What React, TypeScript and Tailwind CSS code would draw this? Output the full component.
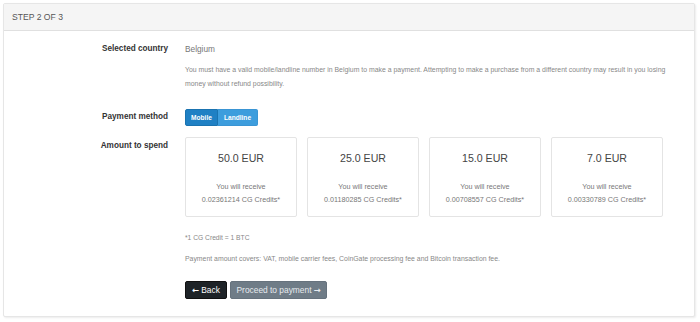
const amounts = [
  { eur: "50.0 EUR", credits: "0.02361214" },
  { eur: "25.0 EUR", credits: "0.01180285" },
  { eur: "15.0 EUR", credits: "0.00708557" },
  { eur: "7.0 EUR", credits: "0.00330789" },
];

export default function App() {
  return (
    <div className="min-h-[322px] bg-white pt-[3px] pl-[3px] font-['Liberation_Sans',Arial,sans-serif]">
      <div className="w-[692px] rounded-[2px] border border-[#e6e6e6] bg-white shadow-[1px_1px_2px_rgba(0,0,0,0.08)]">
        <div className="flex h-[27px] items-center border-b border-[#e0e0e0] bg-[#f5f5f5] px-[8px] text-[8.6px] text-[#555]">
          STEP 2 OF 3
        </div>

        <div className="grid grid-cols-[164px_1fr] gap-x-[17px] pt-[11px] pb-[17px]">
          {/* Selected country */}
          <div className="text-right text-[8.2px] font-bold leading-[14px] text-[#333]">Selected country</div>
          <div>
            <div className="text-[8.3px] leading-[14px] text-[#777]">Belgium</div>
            <p className="mt-[7px] text-[6.9px] leading-[14px] text-[#888]">
              You must have a valid mobile/landline number in Belgium to make a payment. Attempting to make a purchase from a different country may result in you losing
              <br />
              money without refund possibility.
            </p>
          </div>

          {/* Payment method */}
          <div className="mt-[18px] flex h-[17px] items-center justify-end text-[8.2px] font-bold text-[#333]">
            Payment method
          </div>
          <div className="mt-[18px] flex">
            <button className="h-[17px] w-[33px] rounded-l-[2px] border border-[#1a73b0] bg-[#1f80c4] text-[6.6px] font-bold text-white">
              Mobile
            </button>
            <button className="h-[17px] w-[40px] rounded-r-[2px] border border-l-0 border-[#3a95d4] bg-[#3d9ddd] text-[6.6px] font-bold text-white">
              Landline
            </button>
          </div>

          {/* Amount to spend */}
          <div className="mt-[11px] pt-[2px] text-right text-[8.2px] font-bold leading-[14px] text-[#333]">Amount to spend</div>
          <div className="mt-[11px]">
            <div className="flex gap-[10px]">
              {amounts.map((a) => (
                <div
                  key={a.eur}
                  className="flex h-[80px] w-[112px] flex-col items-center rounded-[2px] border border-[#e4e4e4] bg-white pt-[13px]"
                >
                  <div className="text-[10.6px] leading-[14px] text-[#444]">{a.eur}</div>
                  <div className="mt-[15px] text-center text-[7.2px] leading-[13px] text-[#777]">
                    You will receive
                    <br />
                    {a.credits} CG Credits*
                  </div>
                </div>
              ))}
            </div>

            <p className="mt-[14px] text-[6.7px] leading-[14px] text-[#888]">*1 CG Credit = 1 BTC</p>
            <p className="mt-[7px] text-[6.9px] leading-[14px] text-[#888]">
              Payment amount covers: VAT, mobile carrier fees, CoinGate processing fee and Bitcoin transaction fee.
            </p>

            <div className="mt-[15px] flex gap-[3px]">
              <button className="flex h-[18px] w-[42px] items-center justify-center gap-[2px] rounded-[2px] border border-[#111] bg-[#1e2327] text-[8.4px] text-white">
                <span className="font-['DejaVu_Sans'] font-bold">←</span>
                <span>Back</span>
              </button>
              <button className="flex h-[18px] w-[97px] items-center justify-center gap-[2px] rounded-[2px] border border-[#66727d] bg-[#6f7c87] text-[8.4px] text-[#e6eaee]">
                <span>Proceed to payment</span>
                <span className="font-['DejaVu_Sans'] font-bold">→</span>
              </button>
            </div>
          </div>
        </div>
      </div>
    </div>
  );
}
